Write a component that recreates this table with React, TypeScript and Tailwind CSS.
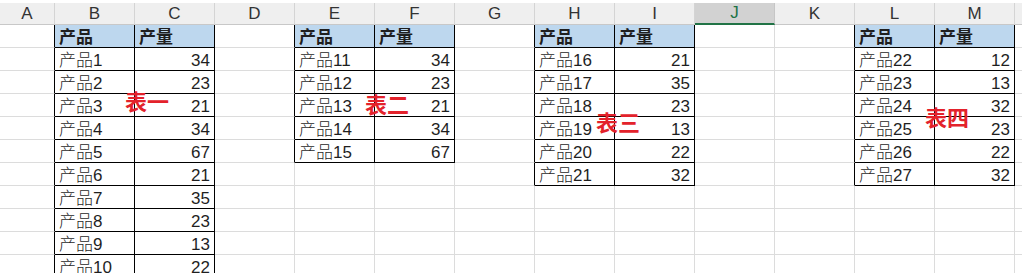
import React from "react";

const COLS = ["A", "B", "C", "D", "E", "F", "G", "H", "I", "J", "K", "L", "M", "N"];

type Table = { c: number; items: [string, number][] };

const TABLES: Table[] = [
  {
    c: 1,
    items: [
      ["产品1", 34],
      ["产品2", 23],
      ["产品3", 21],
      ["产品4", 34],
      ["产品5", 67],
      ["产品6", 21],
      ["产品7", 35],
      ["产品8", 23],
      ["产品9", 13],
      ["产品10", 22],
      ["产品11", 34],
    ],
  },
  {
    c: 4,
    items: [
      ["产品11", 34],
      ["产品12", 23],
      ["产品13", 21],
      ["产品14", 34],
      ["产品15", 67],
    ],
  },
  {
    c: 7,
    items: [
      ["产品16", 21],
      ["产品17", 35],
      ["产品18", 23],
      ["产品19", 13],
      ["产品20", 22],
      ["产品21", 32],
    ],
  },
  {
    c: 11,
    items: [
      ["产品22", 12],
      ["产品23", 13],
      ["产品24", 32],
      ["产品25", 23],
      ["产品26", 22],
      ["产品27", 32],
    ],
  },
];

const NROWS = 12;

type Cell = { text: string; kind: "head" | "name" | "num" } | null;

function buildGrid(): Cell[][] {
  const g: Cell[][] = Array.from({ length: NROWS }, () => Array(COLS.length).fill(null));
  for (const t of TABLES) {
    g[0][t.c] = { text: "产品", kind: "head" };
    g[0][t.c + 1] = { text: "产量", kind: "head" };
    t.items.forEach(([n, v], i) => {
      if (i + 1 < NROWS) {
        g[i + 1][t.c] = { text: n, kind: "name" };
        g[i + 1][t.c + 1] = { text: String(v), kind: "num" };
      }
    });
  }
  return g;
}

const LABELS = [
  { text: "表一", cls: "left-[125px] top-[89px]" },
  { text: "表二", cls: "left-[365px] top-[92px]" },
  { text: "表三", cls: "left-[596px] top-[110px]" },
  { text: "表四", cls: "left-[925px] top-[105px]" },
];

export default function App() {
  const g = buildGrid();
  const inT = (r: number, c: number) => r >= 0 && r < NROWS && c >= 0 && c < COLS.length && g[r][c] !== null;
  return (
    <div
      className="relative w-[1022px] h-[273px] overflow-hidden bg-white text-[#1f1f1f]"
      style={{ fontFamily: '"Liberation Sans", "Noto Sans CJK SC", sans-serif' }}
    >
      <div className="grid grid-cols-[55px_repeat(13,80px)] w-max">
        {COLS.map((c) => {
          const sel = c === "J";
          return (
            <div key={c} className="h-[25px] pt-[3px] bg-white">
              <div
                className={
                  sel
                    ? "h-[22px] bg-[#d2d2d2] border-r border-r-[#c6c6c6] border-b-2 border-b-[#217346] flex items-center justify-center text-[17px] font-light text-[#217346]"
                    : "h-[22px] bg-[#efefef] border-r border-r-[#d4d4d4] border-b border-b-[#c8c8c8] flex items-center justify-center text-[17px] font-light text-[#333]"
                }
              >
                {c}
              </div>
            </div>
          );
        })}
        {g.map((row, r) =>
          row.map((cell, c) => {
            const rBlack = inT(r, c) || inT(r, c + 1);
            const bBlack = inT(r, c) || inT(r + 1, c);
            const cls = [
              "h-[23px] border-r border-b flex items-center text-[17px] leading-none whitespace-nowrap",
              rBlack ? "border-r-black" : "border-r-[#dcdcdc]",
              bBlack ? "border-b-black" : "border-b-[#dcdcdc]",
              cell?.kind === "head" ? "bg-[#bdd7ee] font-bold pl-[4px] pt-[2px]" : "",
              cell?.kind === "name" ? "pl-[4px] pt-[2px] font-light" : "",
              cell?.kind === "num" ? "justify-end pr-[4px] pt-[2px] font-light" : "",
            ].join(" ");
            return (
              <div key={r + "-" + c} className={cls}>
                {cell?.text}
              </div>
            );
          })
        )}
      </div>
      {LABELS.map((l) => (
        <div
          key={l.text}
          className={"absolute text-[22px] leading-none font-bold text-[#e3222b] " + l.cls}
          style={{ fontFamily: '"Noto Sans CJK SC", sans-serif' }}
        >
          {l.text}
        </div>
      ))}
    </div>
  );
}
